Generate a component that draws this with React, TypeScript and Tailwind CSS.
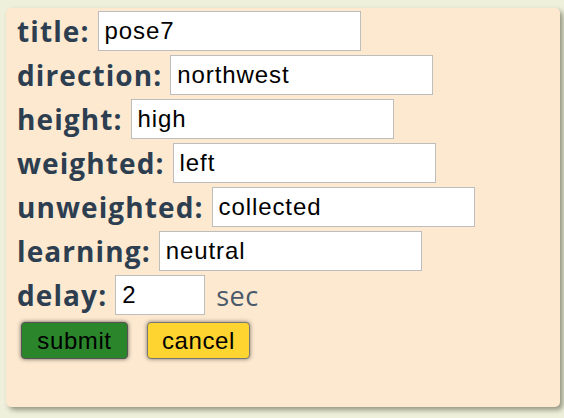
import { useState } from 'react';

const fields = [
  { name: 'title', value: 'pose7' },
  { name: 'direction', value: 'northwest' },
  { name: 'height', value: 'high' },
  { name: 'weighted', value: 'left' },
  { name: 'unweighted', value: 'collected' },
  { name: 'learning', value: 'neutral' },
];

const labelCls =
  "text-[28px] font-bold tracking-[1.1px] text-[#2c3e50] leading-none font-['Open_Sans',sans-serif]";
const inputCls =
  "h-10 bg-white border border-[#bdbdbd] px-[6px] text-[24px] tracking-[0.9px] text-black font-['Liberation_Sans',Arial,sans-serif] outline-none";

export default function App() {
  const [form, setForm] = useState<Record<string, string>>(
    Object.fromEntries(fields.map((f) => [f.name, f.value]))
  );
  const [delay, setDelay] = useState('2');

  return (
    <div className="w-[564px] h-[418px] bg-[#eef0dc] pt-2 pl-[6px]">
      <div className="w-[554px] h-[399px] bg-[#fde9d0] rounded-[5px] shadow-[3px_3px_5px_rgba(90,90,70,0.6)] pt-[3px] pl-[11px] flex flex-col gap-1">
        {fields.map((f) => (
          <div key={f.name} className="flex items-center gap-2 h-10">
            <label className={labelCls}>{f.name}:</label>
            <input
              value={form[f.name]}
              onChange={(e) => setForm((p) => ({ ...p, [f.name]: e.target.value }))}
              className={`${inputCls} w-[263px]`}
            />
          </div>
        ))}
        <div className="flex items-center gap-2 h-10">
          <label className={labelCls}>delay:</label>
          <input value={delay} onChange={(e) => setDelay(e.target.value)} className={`${inputCls} w-[90px]`} />
          <span className="ml-[3px] text-[27px] tracking-[0.5px] text-[#4a5a6b] font-['Open_Sans',sans-serif] leading-none">sec</span>
        </div>
        <div className="flex gap-[19px] mt-[3px] ml-1 font-['Liberation_Sans',Arial,sans-serif] text-[24px] tracking-[0.6px] text-black">
          <button className="w-[107px] h-[37px] rounded-[4px] bg-[#2b862b] border border-[#555] shadow-[0_0_4px_rgba(0,0,0,0.6)]">
            submit
          </button>
          <button className="w-[103px] h-[37px] rounded-[4px] bg-[#fdd430] border border-[#777] shadow-[0_0_4px_rgba(0,0,0,0.5)]">
            cancel
          </button>
        </div>
      </div>
    </div>
  );
}
